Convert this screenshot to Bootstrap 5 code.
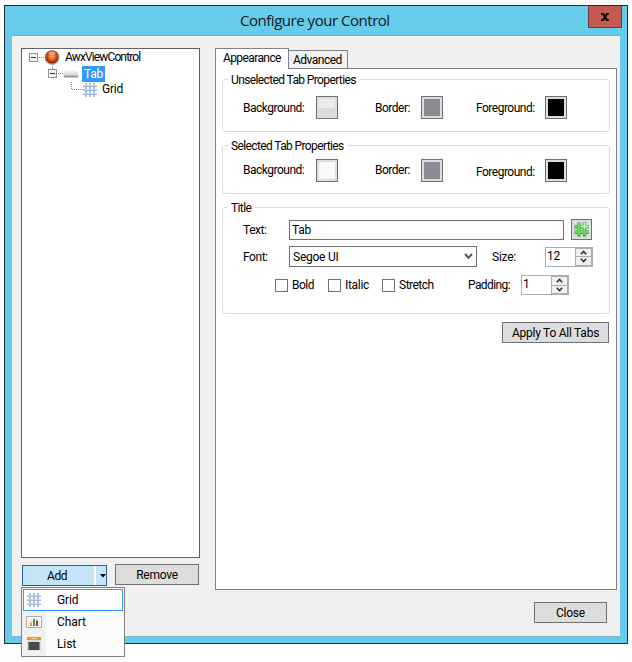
<!DOCTYPE html>
<html lang="en">
<head>
<meta charset="utf-8">
<title>Configure your Control</title>
<link href="https://cdn.jsdelivr.net/npm/bootstrap@5.3.0/dist/css/bootstrap.min.css" rel="stylesheet">
<style>
body{width:632px;height:662px;overflow:hidden;background:#fff;color:#000;font:12px/16px Roboto,"Open Sans",sans-serif;letter-spacing:-.25px;padding:5px 0 0 4px}
.window{width:624px;height:639px;background:#67cbea;border:1px solid #20303a;padding:0 7px 7px}
.titlebar{height:29px}
.titlebar h1{font:15px/29px "Open Sans","Noto Sans",sans-serif;letter-spacing:-.47px;margin:0 0 0 228px;white-space:nowrap;color:#10171b}
.win-close{width:34px;height:22px;background:#c35b51;border:1px solid #633d3b;border-top:0;border-radius:0;padding:0;margin-right:-2px}
.client{height:602px;background:#f0f0f0;border-top:1px solid #79aec2;border-bottom:1px solid #79b4cb;padding:12px 3px 0 9px}
.left-pane{width:179px}
.tree{height:510px;background:#fff;border:1px solid #5f6068;padding:1px 0 0 7px}
.tree-row{height:16px;line-height:15px}
.tree-row svg{flex:none}
.root-name{letter-spacing:-.87px}
.picked{background:#3399ff;color:#fff;padding:0 2px;width:23px;line-height:16px}
.btn-win{font-size:12px;line-height:16px;letter-spacing:-.25px;color:#000;background:#ddd;border:1px solid #707070;border-radius:0;padding:0}
.btn-win:hover{background:#ddd;color:#000;border-color:#707070}
.add{width:85px;height:21px;background:#c4e5f6;border:1px solid #2c628b;margin:7px 0 0 1px;letter-spacing:-.4px}
.add .main{width:73px;padding-left:24px;border-right:2px solid #fff}
.remove{width:84px;height:21px;margin:6px 0 0 8px}
.menu{left:-2px;top:21px;width:104px;height:70px;border:1px solid #808080;padding:1px;letter-spacing:-.1px;background:linear-gradient(90deg,#f1f1f1 24px,#fcfcfc 24px)}
.menu-row{height:22px;padding-left:3px}
.menu-row.active-row{background:#fff;border:1px solid #3399ff;padding-left:2px}
.menu-row svg{margin-right:15px}
.right-pane{width:402px;margin-left:15px}
.tabs{height:20px}
.tab-on{width:74px;height:21px;background:#fff;border:1px solid #82828c;border-bottom:0;padding-left:7px;line-height:19px;position:relative;z-index:1;letter-spacing:-.6px}
.tab-off{width:59px;height:18px;background:#f0f0f0;border:1px solid #82828c;border-left:0;border-bottom:0;padding-left:4px;line-height:18px;letter-spacing:-.5px}
.sheet{height:522px;background:#fff;border:1px solid #82828c;padding:10px 6px 0}
.group{width:388px;border:1px solid #d5dfe5;border-radius:3px;padding-left:20px}
.group h2{font-size:12px;font-weight:400;line-height:14px;margin:-7px 0 0 -15px;padding:0 3px;background:#fff;letter-spacing:-.62px}
.g1{height:53px}.g2{height:49px;margin-top:13px}.g3{height:107px;margin-top:13px}
.colors{display:grid;grid-template-columns:73px 59px 46px 55px 69px 22px;align-items:center;letter-spacing:-.5px}
.g1 .colors{margin-top:9px}
.g2 .colors{margin-top:6px}
.g2 .colors span:first-child,.g2 .border-label{margin-top:-1px}
.g2 .fore-label{margin-top:3px}
.swatch{display:block;width:22px;height:23px;border:1px solid #707070;background:#ddd;padding:2px}
.swatch i{display:block;width:16px;height:17px}
.glass{background:linear-gradient(#ececec 52%,#dadada 52%)}
.pale{background:#f9f9f9}.grey{background:#8c8c94}.black{background:#000}
.field{border:1px solid #707070;background:#fff;padding:0 3px}
.lbl{width:46px;letter-spacing:-.45px}
.check{width:13px;height:13px;border:1px solid #707070;background:#fff}
.spin{width:48px;height:20px;border:1px solid #abadb3;background:#fff;padding-left:1px}
.spin .arrows{width:17px;background:#abadb3;padding:1px;gap:1px}
.spin .arrows span{height:8px;background:#f0f0f0;display:flex;align-items:center;justify-content:center}
.text-field{width:275px;height:20px;margin-right:7px;padding-left:2px}
.hash{width:21px;height:21px}
.font-line{margin-top:6px}
.font-field{width:188px;height:21px}
.size-label{margin-left:15px;width:53px}
.checks{margin:8px 0 0 32px}
.ck1{width:40px;padding-left:4px;letter-spacing:-.5px}.ck2{width:41px;padding-left:4px;letter-spacing:-.3px}.ck3{width:73px;padding-left:4px;letter-spacing:-.5px}.pad-label{width:53px;letter-spacing:-.6px}
.apply{width:107px;height:21px;margin:8px 0 0 280px}
.close-dialog{width:73px;height:21px;margin:12px 0 0 319px}
</style>
<script src="https://cdn.jsdelivr.net/npm/bootstrap@5.3.0/dist/js/bootstrap.bundle.min.js"></script>
</head>
<body>
<svg width="0" height="0" class="position-absolute">
<defs>
<g id="gridicon"><path d="M4 1v14M8 1v14M12 1v14" stroke="#a9c3de" stroke-width="2"/><path d="M1 4h14M1 8h14M1 12h14" stroke="#8fafd1" stroke-width="1.6"/><path d="M1 3.5h14M1 7.5h14M1 11.5h14" stroke="#d4e3f1" stroke-width=".7"/></g>
<g id="minus"><rect x=".5" y=".5" width="8" height="8" fill="#f4f4f4" stroke="#919191"/><path d="M2 4.5h5" stroke="#333"/></g>
<path id="up" d="M.8 4.2 3.5 1.5l2.7 2.7" fill="none" stroke="#333" stroke-width="1.6"/>
<path id="down" d="M.8 .8 3.5 3.5 6.2 .8" fill="none" stroke="#333" stroke-width="1.6"/>
<radialGradient id="ball" cx=".5" cy=".45"><stop stop-color="#ffc46b"/><stop offset=".45" stop-color="#f06a22"/><stop offset="1" stop-color="#9c2109"/></radialGradient>
</defs>
</svg>
<main class="window">
<header class="titlebar d-flex justify-content-between">
<h1>Configure your Control</h1>
<button class="win-close d-flex align-items-center justify-content-center" aria-label="Close window"><svg width="10" height="8"><path d="M1 .8h2L5 3 7 .8h2M1 7.2h2L5 5l2 2.2h2M3 1.5l4 5M7 1.5l-4 5" fill="none" stroke="#000" stroke-width="1.6"/></svg></button>
</header>
<div class="client d-flex">
<section class="left-pane">
<div class="tree">
<div class="tree-row d-flex"><svg width="36" height="16" viewBox="-1 0 36 16"><path d="M9 7.5h7M23.5 14v2" stroke="#888" stroke-dasharray="1 1"/><use href="#minus" x="-1" y="3"/><circle cx="22" cy="7.5" r="7.4" fill="#b9aaa6"/><circle cx="22" cy="7" r="6.6" fill="url(#ball)"/><ellipse cx="22" cy="3" rx="3.5" ry="1.8" fill="#ffd2ae" opacity=".55"/></svg><span class="root-name">AwxViewControl</span></div>
<div class="tree-row d-flex"><svg width="53" height="16" viewBox="-1 0 53 16"><path d="M28 7.5h7M22.5 0v3" stroke="#888" stroke-dasharray="1 1"/><use href="#minus" x="18" y="3"/><path d="M36 4.5h10l2.500 4v2.500h-15V8.500z" fill="#dedede"/><path d="M37 4.500h8l1 2H36z" fill="#f5f5f5"/><path d="M34 9.500h14v2H34z" fill="#9b9b9b"/></svg><span class="picked">Tab</span></div>
<div class="tree-row d-flex"><svg width="73" height="16" viewBox="-1 0 73 16"><path d="M41.500 0v8M42 7.500h11" fill="none" stroke="#888" stroke-dasharray="1 1"/><use href="#gridicon" x="52"/></svg><span>Grid</span></div>
</div>
<div class="d-flex align-items-start">
<div class="add position-relative d-flex align-items-stretch">
<span class="main d-flex align-items-center">Add</span>
<span class="d-flex align-items-center ps-1"><svg width="6" height="4"><path d="M0 0h6L3 3.500z"/></svg></span>
<div class="menu position-absolute">
<div class="menu-row active-row d-flex align-items-center"><svg width="16" height="16"><use href="#gridicon"/></svg>Grid</div>
<div class="menu-row d-flex align-items-center"><svg width="16" height="16"><path d="M.5 2.500h15v11H.5z" fill="#fff" stroke="#aaa"/><path d="M2 4h12v8H2z" fill="#eee"/><path d="M4 8.500h2V12H4z" fill="#f39b28"/><path d="M7 5h2v7H7z" fill="#32a33a"/><path d="M10 6.500h2V12h-2z" fill="#c43232"/></svg>Chart</div>
<div class="menu-row d-flex align-items-center"><svg width="16" height="16"><path d="M1 1h14v3H1z" fill="#f19328"/><path d="M5 2.500h6" stroke="#ffd290"/><path d="M1 4h14v11H1z" fill="#dcdcdc"/><path d="M2.500 6h11v8h-11z" fill="#444"/><path d="M3 8h10M3 10h10M3 12h10" stroke="#606060" stroke-width=".5"/></svg>List</div>
</div>
</div>
<button class="btn btn-win remove">Remove</button>
</div>
</section>
<section class="right-pane">
<div class="tabs d-flex align-items-end"><div class="tab-on align-self-start">Appearance</div><div class="tab-off">Advanced</div></div>
<div class="sheet">
<section class="group g1"><h2 class="d-table">Unselected Tab Properties</h2>
<div class="colors"><span>Background:</span><span class="swatch"><i class="glass"></i></span><span>Border:</span><span class="swatch"><i class="grey"></i></span><span>Foreground:</span><span class="swatch"><i class="black"></i></span></div></section>
<section class="group g2"><h2 class="d-table">Selected Tab Properties</h2>
<div class="colors"><span>Background:</span><span class="swatch"><i class="pale"></i></span><span class="border-label">Border:</span><span class="swatch"><i class="grey"></i></span><span class="fore-label">Foreground:</span><span class="swatch"><i class="black"></i></span></div></section>
<section class="group g3"><h2 class="d-table">Title</h2>
<div class="d-flex align-items-center mt-1"><span class="lbl">Text:</span><span class="field text-field d-flex align-items-center">Tab</span><button class="btn btn-win hash d-flex align-items-center justify-content-center" aria-label="Insert tag"><svg width="15" height="15" fill="none"><path d="M5 .5v14M10.500 .5v14M.5 4.800h14M.5 10.300h14" stroke="#35a93c" stroke-width="3.400"/><path d="M5 1v12M10.500 1v12M1 4.500h13M1 10h13" stroke="#66dc58" stroke-width="2.200"/><path d="M10.500 1v6M7 4.500h7" stroke="#c4fab5" stroke-width="1.500"/></svg></button></div>
<div class="font-line d-flex align-items-center"><span class="lbl">Font:</span><span class="field font-field d-flex align-items-center justify-content-between">Segoe UI<svg width="9" height="7"><path d="m1 1 3.500 3.800L8 1" fill="none" stroke="#555" stroke-width="2"/></svg></span><span class="size-label">Size:</span><span class="spin d-flex justify-content-between"><span>12</span><span class="arrows d-flex flex-column"><span><svg width="7" height="5"><use href="#up"/></svg></span><span><svg width="7" height="5"><use href="#down"/></svg></span></span></span></div>
<div class="checks d-flex align-items-center"><i class="check"></i><span class="ck1">Bold</span><i class="check"></i><span class="ck2">Italic</span><i class="check"></i><span class="ck3">Stretch</span><span class="pad-label">Padding:</span><span class="spin d-flex justify-content-between"><span>1</span><span class="arrows d-flex flex-column"><span><svg width="7" height="5"><use href="#up"/></svg></span><span><svg width="7" height="5"><use href="#down"/></svg></span></span></span></div>
</section>
<button class="btn btn-win d-block apply">Apply To All Tabs</button>
</div>
<button class="btn btn-win d-block close-dialog">Close</button>
</section>
</div>
</main>
</body>
</html>
